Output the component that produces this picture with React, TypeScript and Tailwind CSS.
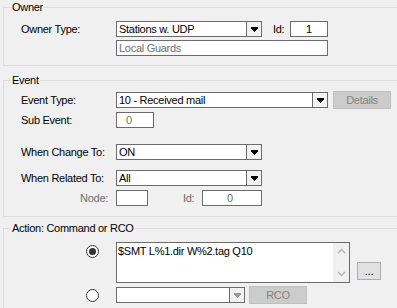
import React from "react";

function DownArrow({ color = "#000" }: { color?: string }) {
  return (
    <svg width="7" height="5" viewBox="0 0 7 5" shapeRendering="crispEdges" className="block">
      <path d="M0 0H7V2H6V3H5V4H4V5H3V4H2V3H1V2H0Z" fill={color} />
    </svg>
  );
}

function Chevron({ up }: { up?: boolean }) {
  return (
    <svg width="9" height="6" viewBox="0 0 9 6" className="block">
      <path
        d={up ? "M1 5L4.5 1.5L8 5" : "M1 1L4.5 4.5L8 1"}
        fill="none"
        stroke="#b5b5b5"
        strokeWidth="1.5"
      />
    </svg>
  );
}

function Combo({ width, text, disabled }: { width: string; text: string; disabled?: boolean }) {
  return (
    <div className={`flex h-[16px] shrink-0 border border-[#6b6b6b] bg-white ${width}`}>
      <div className="flex-1 overflow-hidden whitespace-nowrap pl-[2px] leading-[14px] text-black">{text}</div>
      <div className="flex w-[15px] items-center justify-center border-l border-[#6b6b6b] bg-[#f2f2f2]">
        <DownArrow color={disabled ? "#9a9a9a" : "#000"} />
      </div>
    </div>
  );
}

function Legend({ text }: { text: string }) {
  return (
    <span className="absolute left-[7px] top-[-7px] whitespace-nowrap bg-[#f0f0f0] px-[1px] leading-[13px] text-black">
      {text}
    </span>
  );
}

function Label({ text }: { text: string }) {
  return <div className="w-[112px] shrink-0 whitespace-nowrap pl-[17px] leading-[13px] text-black">{text}</div>;
}

function Radio({ checked }: { checked?: boolean }) {
  return (
    <div className="mt-[3px] flex h-[13px] w-[13px] shrink-0 items-center justify-center rounded-full border border-[#333333] bg-white">
      {checked && <div className="h-[7px] w-[7px] rounded-full bg-[#333333]" />}
    </div>
  );
}

export default function App() {
  return (
    <div className="h-[308px] w-[397px] overflow-hidden bg-[#f0f0f0] pt-[7px] font-['Liberation_Sans',Arial,sans-serif] text-[11px] tracking-[-0.28px]">
      {/* Owner */}
      <div className="relative ml-[3px] w-[400px] border border-[#dcdcdc] pb-[9px] pt-[13px]">
        <Legend text="Owner" />
        <div className="flex h-[16px] items-center">
          <Label text="Owner Type:" />
          <Combo width="w-[146px]" text="Stations w. UDP" />
          <span className="ml-[11px] w-[17px] leading-[13px] text-black">Id:</span>
          <div className="h-[16px] w-[38px] border border-[#6b6b6b] bg-white text-center leading-[14px] text-black">1</div>
        </div>
        <div className="mt-[3px] flex h-[16px] items-center">
          <div className="w-[112px] shrink-0" />
          <div className="h-[16px] w-[212px] border border-[#6b6b6b] bg-white pl-[2px] leading-[14px] text-[#6d6d6d]">
            Local Guards
          </div>
        </div>
      </div>

      {/* Event */}
      <div className="relative ml-[3px] mt-[14px] w-[400px] border border-[#dcdcdc] pb-[10px] pt-[10px]">
        <Legend text="Event" />
        <div className="flex h-[18px] items-center">
          <Label text="Event Type:" />
          <Combo width="w-[212px]" text="10 - Received mail" />
          <div className="ml-[5px] flex h-[18px] w-[58px] items-center justify-center border border-[#bfbfbf] bg-[#cccccc] leading-[13px] text-[#838383]">
            Details
          </div>
        </div>
        <div className="mt-[3px] flex h-[16px] items-center">
          <Label text="Sub Event:" />
          <div className="h-[16px] w-[38px] border border-[#6b6b6b] bg-white pl-[9px] leading-[14px] text-[#6d6d6d]">0</div>
        </div>
        <div className="mt-[16px] flex h-[16px] items-center">
          <Label text="When Change To:" />
          <Combo width="w-[146px]" text="ON" />
        </div>
        <div className="mt-[10px] flex h-[16px] items-center">
          <Label text="When Related To:" />
          <Combo width="w-[146px]" text="All" />
        </div>
        <div className="mt-[4px] flex h-[16px] items-center">
          <div className="w-[112px] shrink-0 pr-[8px] text-right leading-[13px] text-[#6d6d6d]">Node:</div>
          <div className="h-[16px] w-[32px] border border-[#6b6b6b] bg-white" />
          <span className="ml-[35px] w-[19px] leading-[13px] text-[#6d6d6d]">Id:</span>
          <div className="h-[16px] w-[60px] border border-[#6b6b6b] bg-white pr-[4px] text-center leading-[14px] text-[#6d6d6d]">0</div>
        </div>
      </div>

      {/* Action */}
      <div className="relative ml-[3px] mt-[11px] h-[120px] w-[400px] border border-[#dcdcdc] pt-[13px]">
        <Legend text="Action: Command or RCO" />
        <div className="flex items-start pl-[82px]">
          <Radio checked />
          <div className="ml-[17px] flex h-[41px] w-[234px] border border-[#6b6b6b] bg-white">
            <div className="flex-1 pl-[1px] pt-[2px] leading-[13px] text-black">$SMT L%1.dir W%2.tag Q10</div>
            <div className="flex w-[16px] flex-col items-center justify-between bg-[#f0f0f0] py-[5px]">
              <Chevron up />
              <Chevron />
            </div>
          </div>
          <div className="ml-[7px] mt-[20px] flex h-[18px] w-[24px] items-center justify-center border border-[#adadad] bg-[#e1e1e1] leading-[13px] text-black">
            ...
          </div>
        </div>
        <div className="mt-[3px] flex h-[18px] items-start pl-[82px]">
          <Radio />
          <div className="ml-[17px] mt-[1px]">
            <Combo width="w-[129px]" text="" disabled />
          </div>
          <div className="ml-[4px] flex h-[18px] w-[58px] items-center justify-center border border-[#bfbfbf] bg-[#cccccc] leading-[13px] text-[#838383]">
            RCO
          </div>
        </div>
      </div>
    </div>
  );
}
